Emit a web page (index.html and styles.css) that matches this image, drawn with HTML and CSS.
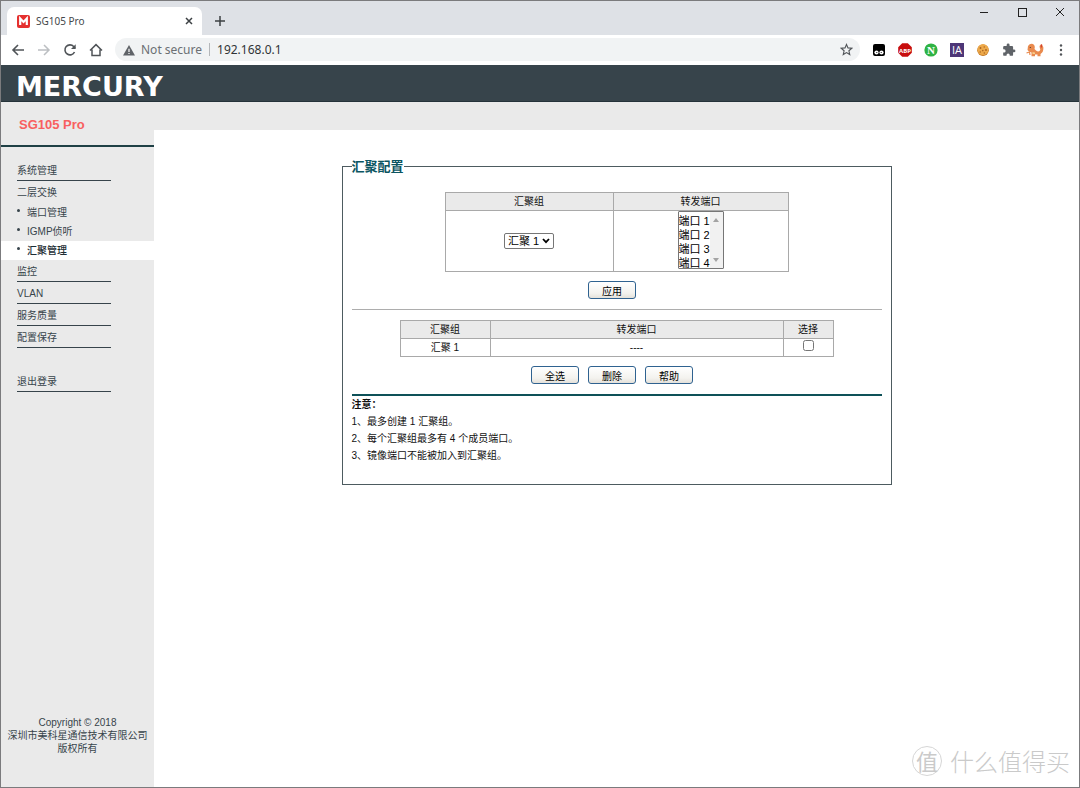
FILE: index.html
```html
<!DOCTYPE html>
<html lang="zh-CN">
<head>
<meta charset="utf-8">
<title>SG105 Pro</title>
<link rel="stylesheet" href="styles.css">
</head>
<body>
<div class="window">
  <div class="tabstrip">
    <div class="tab">
      <svg class="favicon" viewBox="0 0 13 13" width="13" height="13"><rect width="13" height="13" rx="2" fill="#e5302f"/><path d="M3.200 10V3.500L6.500 7L9.800 3.500V10" fill="none" stroke="#fff" stroke-width="2.200"/></svg>
      <span class="tab-title">SG105 Pro</span>
      <button class="icon-btn" aria-label="Close tab"><svg viewBox="0 0 10 10" width="10" height="10"><path d="M2 2L8 8M8 2L2 8" stroke="#3c4043" stroke-width="1.5"/></svg></button>
    </div>
    <button class="icon-btn new-tab" aria-label="New tab"><svg viewBox="0 0 12 12" width="12" height="12"><path d="M6 1V11M1 6H11" stroke="#3c4043" stroke-width="1.5"/></svg></button>
    <div class="window-controls">
      <button class="icon-btn" aria-label="Minimize"><svg viewBox="0 0 10 10" width="10" height="10"><path d="M1 5.5H9" stroke="#222"/></svg></button>
      <button class="icon-btn" aria-label="Maximize"><svg viewBox="0 0 10 10" width="10" height="10"><rect x="1.500" y="1.500" width="8" height="8" fill="none" stroke="#222"/></svg></button>
      <button class="icon-btn" aria-label="Close"><svg viewBox="0 0 10 10" width="10" height="10"><path d="M1 1L9 9M9 1L1 9" stroke="#222"/></svg></button>
    </div>
  </div>

  <div class="toolbar">
    <div class="nav-buttons">
      <button class="icon-btn" aria-label="Back"><svg viewBox="0 0 14 14" width="14" height="14"><path d="M13 7H2M7 2L2 7L7 12" fill="none" stroke="#505458" stroke-width="1.6"/></svg></button>
      <button class="icon-btn" aria-label="Forward"><svg viewBox="0 0 14 14" width="14" height="14"><path d="M1 7H12M7 2L12 7L7 12" fill="none" stroke="#bcbfc2" stroke-width="1.5"/></svg></button>
      <button class="icon-btn" aria-label="Reload"><svg viewBox="0 0 14 14" width="14" height="14"><path d="M11.5 9A5 5 0 1 1 10.7 3.5L12 5" fill="none" stroke="#505458" stroke-width="1.6"/><path d="M12.7 1.3V6H8Z" fill="#505458"/></svg></button>
      <button class="icon-btn" aria-label="Home"><svg viewBox="0 0 14 14" width="14" height="14"><path d="M1 7.5L7 1.6L13 7.5M3 6.5V12.5H11V6.5" fill="none" stroke="#505458" stroke-width="1.5"/></svg></button>
    </div>
    <div class="address">
      <svg viewBox="0 0 12 12" width="12" height="12"><path d="M6 1L12 11.5H0Z" fill="#5f6368"/><path d="M6 4.8V8M6 8.9V10.1" stroke="#fff" stroke-width="1.2"/></svg>
      <label class="secure" for="url">Not secure</label>
      <input id="url" class="url" type="text" value="192.168.0.1">
      <button class="icon-btn" aria-label="Bookmark"><svg viewBox="0 0 14 14" width="13" height="13"><path d="M7 1.6L8.6 5.3L12.7 5.7L9.6 8.4L10.5 12.4L7 10.3L3.5 12.4L4.4 8.4L1.3 5.7L5.4 5.3Z" fill="none" stroke="#505458" stroke-width="1.2"/></svg></button>
    </div>
    <div class="extensions">
      <svg viewBox="0 0 14 14" width="14" height="14"><path d="M3 1H11Q13 1 13 3V11Q13 13 11 13H3Q1 13 1 11V3Q1 1 3 1Z" fill="#000"/><circle cx="4.500" cy="9.500" r="2.100" fill="#fff"/><circle cx="9.500" cy="9.500" r="2.100" fill="#fff"/><circle cx="4.800" cy="9.500" r=".6"/><circle cx="9.200" cy="9.500" r=".6"/></svg>
      <svg viewBox="0 0 14 14" width="14" height="14"><path d="M4.2 .2H9.8L13.8 4.2V9.8L9.8 13.8H4.2L.2 9.8V4.2Z" fill="#c70d0d"/><text x="7" y="9.5" class="badge-abp">ABP</text></svg>
      <svg viewBox="0 0 14 14" width="14" height="14"><circle cx="7" cy="7" r="6.6" fill="#2fb344"/><text x="7" y="10.5" class="badge-n">N</text></svg>
      <svg viewBox="0 0 14 14" width="14" height="14"><rect width="14" height="14" fill="#4d3677"/><text x="7" y="11" class="badge-ia">IA</text></svg>
      <svg viewBox="0 0 14 14" width="14" height="14"><circle cx="7" cy="7.2" r="5.8" fill="#c27722"/><circle cx="7" cy="6.6" r="5.5" fill="#eda94a"/><g fill="#a8611f"><circle cx="4.5" cy="5" r=".9"/><circle cx="8.2" cy="4" r=".7"/><circle cx="10" cy="7" r=".9"/><circle cx="6.8" cy="7.6" r=".8"/><circle cx="4.2" cy="9" r=".7"/><circle cx="8.3" cy="10" r=".7"/></g></svg>
      <svg viewBox="0 0 24 24" width="14" height="14"><path fill="#5f6368" d="M20.500 11H19V7a2 2 0 0 0-2-2h-4V3.500a2.500 2.500 0 0 0-5 0V5H4a2 2 0 0 0-2 2v3.800h1.500a2.700 2.700 0 0 1 0 5.400H2V20a2 2 0 0 0 2 2h3.800v-1.500a2.700 2.700 0 0 1 5.400 0V22H17a2 2 0 0 0 2-2v-4h1.500a2.500 2.500 0 0 0 0-5z"/></svg>
      <svg class="avatar" viewBox="0 0 18 14" width="18" height="14"><path d="M1.500 7L2 3Q4 0 7 1Q9.500 2.500 8.500 6L10 7.500Q12 9 13.500 8Q15 7 13.800 5L13.500 3L15.500 1L17.300 4Q18 9 14.500 11V13.300H11.500V11.500H9V13.300H5.500V9.500L3 8.500Z" fill="#e98a4e"/><path d="M.5 10L3.500 9L4 12" fill="none" stroke="#e98a4e" stroke-width="1.200"/><path d="M15.500 1.500L15.300 4.500" stroke="#d5432f" stroke-width="1.400"/><circle cx="4.300" cy="4.500" r=".6" fill="#333"/><path d="M6.500 9L9 9.500V11H6.500Z" fill="#f6d08c"/></svg>
      <button class="icon-btn" aria-label="Menu"><svg viewBox="0 0 14 14" width="14" height="14"><g fill="#505458"><circle cx="7" cy="2.500" r="1.200"/><circle cx="7" cy="7" r="1.200"/><circle cx="7" cy="11.500" r="1.200"/></g></svg></button>
    </div>
  </div>

  <header class="brand"><span class="logo">MERCURY</span></header>

  <div class="page">
    <aside class="sidebar">
      <h1 class="model">SG105 Pro</h1>
      <nav class="menu">
        <a class="item lined" href="#">系统管理</a>
        <a class="item" href="#">二层交换</a>
        <a class="sub" href="#">端口管理</a>
        <a class="sub" href="#">IGMP侦听</a>
        <a class="sub active" href="#">汇聚管理</a>
        <a class="item lined" href="#">监控</a>
        <a class="item lined" href="#">VLAN</a>
        <a class="item lined" href="#">服务质量</a>
        <a class="item lined" href="#">配置保存</a>
        <a class="item lined logout" href="#">退出登录</a>
      </nav>
      <footer class="copyright">Copyright © 2018<br>深圳市美科星通信技术有限公司<br>版权所有</footer>
    </aside>

    <main class="content">
      <form class="panel" aria-labelledby="panel-title">
        <h2 class="legend" id="panel-title">汇聚配置</h2>
        <table class="grid config">
          <thead><tr><th class="col-group">汇聚组</th><th>转发端口</th></tr></thead>
          <tbody><tr>
            <td>
              <div class="dropdown">
                <select class="group-select" aria-label="汇聚组"><option>汇聚 1</option></select>
                <svg class="chevron" viewBox="0 0 8 6" width="8" height="6"><path d="M1 1L4 4.200L7 1" fill="none" stroke="#000" stroke-width="1.800"/></svg>
              </div>
            </td>
            <td class="ports-cell">
              <div class="listbox">
                <select class="ports" multiple size="4" aria-label="转发端口"><option>端口 1</option><option>端口 2</option><option>端口 3</option><option>端口 4</option></select>
                <span class="gutter"><svg viewBox="0 0 6 4" width="6" height="4"><path d="M0 4L3 0L6 4Z" fill="#a3a3a3"/></svg><svg viewBox="0 0 6 4" width="6" height="4"><path d="M0 0L3 4L6 0Z" fill="#a3a3a3"/></svg></span>
              </div>
            </td>
          </tr></tbody>
        </table>
        <div class="actions"><button class="btn" type="button">应用</button></div>
        <hr class="rule">
        <table class="grid list">
          <thead><tr><th class="col-name">汇聚组</th><th>转发端口</th><th class="col-pick">选择</th></tr></thead>
          <tbody><tr><td>汇聚 1</td><td>----</td><td><input class="check" type="checkbox" aria-label="选择 汇聚 1"></td></tr></tbody>
        </table>
        <div class="actions">
          <button class="btn" type="button">全选</button>
          <button class="btn" type="button">删除</button>
          <button class="btn" type="button">帮助</button>
        </div>
        <hr class="rule strong">
        <div class="notes">
          <strong>注意：</strong>
          <p>1、最多创建 1 汇聚组。</p>
          <p>2、每个汇聚组最多有 4 个成员端口。</p>
          <p>3、镜像端口不能被加入到汇聚组。</p>
        </div>
      </form>
    </main>
  </div>
  <div class="watermark"><span class="seal">值</span><span>什么值得买</span></div>
</div>
</body>
</html>
```
FILE: styles.css
```css
* { box-sizing: border-box; }

body {
  margin: 0;
  font: 10px/14px "Liberation Sans", "Noto Sans CJK SC", sans-serif;
  color: #111;
  background: #fff;
}

.window {
  position: relative;
  display: flex;
  flex-direction: column;
  min-height: 100vh;
  border: 1px solid #7b7b7d;
}

.icon-btn {
  display: flex;
  padding: 0;
  border: 0;
  background: none;
}

/* Browser chrome */
.tabstrip {
  display: flex;
  height: 34px;
  padding: 6px 0 0 6px;
  background: #dee1e6;
}

.tab {
  display: flex;
  align-items: center;
  gap: 6px;
  width: 195px;
  padding: 0 8px 0 10px;
  border-radius: 7px 7px 0 0;
  background: #fff;
}

.tab-title {
  flex: 1;
  font-family: "Noto Sans", sans-serif;
  color: #45484b;
}

.new-tab { margin-left: 12px; align-items: center; }

.window-controls {
  display: flex;
  gap: 28px;
  margin: 0 14px 0 auto;
  align-items: flex-start;
}

.toolbar {
  display: flex;
  align-items: center;
  height: 30px;
  padding: 0 11px 1px 10px;
  background: #fff;
}

.nav-buttons { display: flex; gap: 12px; }

.address {
  display: flex;
  flex: 1;
  align-items: center;
  height: 23px;
  margin: 0 12px;
  padding: 0 7px 0 8px;
  border-radius: 12px;
  background: #f1f3f4;
  font: 12px/16px "Noto Sans", sans-serif;
}

.secure {
  margin: 0 7px 0 6px;
  padding-right: 7px;
  border-right: 1px solid #b4b7ba;
  line-height: 13px;
  color: #6b6f73;
}

.url {
  flex: 1;
  min-width: 0;
  padding: 0;
  border: 0;
  background: none;
  font: inherit;
  color: #303336;
}

.extensions { display: flex; align-items: center; gap: 12px; }
.avatar { margin: 0 -2px; }

.badge-abp, .badge-n, .badge-ia { fill: #fff; text-anchor: middle; }
.badge-abp { font: bold 6px "Open Sans", sans-serif; }
.badge-n { font: bold 11px "Liberation Serif", serif; }
.badge-ia { font: 11px "Open Sans", sans-serif; }

/* Router page */
.brand {
  display: flex;
  align-items: center;
  height: 37px;
  padding: 8px 0 0 15px;
  border-bottom: 1px solid #25333a;
  background: #37444b;
}

.logo {
  font: bold 27px/28px "DejaVu Sans", sans-serif;
  color: #fff;
}

.page {
  display: flex;
  flex: 1;
  background: #eaeaea;
}

.sidebar {
  display: flex;
  flex-direction: column;
  width: 153px;
  color: #37444b;
}

.model {
  margin: 0;
  padding: 14px 0 11px 18px;
  border-bottom: 2px solid #1f4045;
  font-size: 13px;
  line-height: 18px;
  color: #f8605f;
}

.menu {
  display: flex;
  flex-direction: column;
  padding-top: 12px;
}

.item {
  width: 94px;
  height: 22px;
  margin-left: 16px;
  line-height: 24px;
  color: inherit;
  text-decoration: none;
}

.lined { border-bottom: 1px solid #37444b; }
.logout { margin-top: 22px; }

.sub {
  height: 19px;
  padding-left: 16px;
  line-height: 19px;
  color: inherit;
  text-decoration: none;
}

.sub::before {
  content: "";
  display: inline-block;
  width: 3px;
  height: 3px;
  margin-right: 7px;
  border-radius: 50%;
  background: #37444b;
  vertical-align: 4px;
}

.active { background: #fff; color: #1d2d34; font-weight: 500; }

.copyright {
  margin-top: auto;
  padding-bottom: 32px;
  line-height: 13px;
  text-align: center;
}

.content {
  flex: 1;
  margin-top: 28px;
  padding: 36px 16px;
  background: #fff;
}

.panel {
  max-width: 550px;
  min-height: 319px;
  margin: 0 auto;
  padding: 0 9px;
  border: 1px solid #4d5b60;
}

.legend {
  width: fit-content;
  margin: -9px 0 0;
  background: #fff;
  font-size: 13px;
  line-height: 18px;
  color: #0b5561;
}

.grid {
  margin: 16px auto 0;
  border-collapse: collapse;
  table-layout: fixed;
  text-align: center;
}

.grid th, .grid td {
  height: 18px;
  padding: 0;
  border: 1px solid #a9a9a9;
  font-weight: normal;
  line-height: 16px;
}

.grid th { background: #eaeaea; }

.config { width: 344px; }
.col-group { width: 168px; }
.config td { height: 61px; }
.config .ports-cell { vertical-align: top; }

.dropdown {
  position: relative;
  width: 50px;
  height: 16px;
  margin: 0 auto;
}

.group-select {
  display: block;
  width: 100%;
  height: 16px;
  padding: 0 0 0 3px;
  appearance: none;
  border: 1px solid #767676;
  border-radius: 2px;
  background: #fff;
  font: 11px/14px "Liberation Sans", "Noto Sans CJK SC", sans-serif;
  color: #000;
}

.chevron {
  position: absolute;
  top: 5px;
  right: 4px;
  pointer-events: none;
}

.listbox {
  display: flex;
  width: 46px;
  height: 58px;
  margin: 0 auto;
  border: 1px solid #767676;
  border-radius: 1px;
}

.ports {
  flex: 1;
  min-width: 0;
  padding: 0;
  border: 0;
  overflow: hidden;
  font: 11px/14px "Liberation Sans", "Noto Sans CJK SC", sans-serif;
  color: #000;
}

.ports option {
  height: 14px;
  min-height: 14px;
  padding: 0;
  line-height: 12px;
}

.gutter {
  display: flex;
  flex-direction: column;
  align-items: center;
  justify-content: space-between;
  width: 13px;
  padding: 6px 0;
  background: #f1f1f1;
}

.actions {
  display: flex;
  justify-content: center;
  gap: 9px;
  margin: 9px 9px 0 0;
}

.btn {
  width: 48px;
  height: 18px;
  padding: 3px 0 0;
  border: 1px solid #2f6290;
  border-radius: 3px;
  background: linear-gradient(#fff, #f3f2ee 70%, #e4e1da);
  font: inherit;
  line-height: 13px;
  color: #000;
}

.rule {
  margin: 10px 0 0;
  border: 0;
  border-top: 1px solid #adadad;
}

.strong { border-top: 2px solid #0e5158; }

.list { width: 434px; margin-top: 10px; }
.col-name { width: 90px; }
.col-pick { width: 50px; }

.check {
  display: block;
  width: 11px;
  height: 11px;
  margin: 0 auto 4px;
}

.notes { line-height: 17px; }
.notes p { margin: 0; }

.watermark {
  position: absolute;
  right: 9px;
  bottom: 11px;
  display: flex;
  align-items: center;
  gap: 8px;
  font: 300 24px/30px "Noto Sans CJK SC", sans-serif;
  color: #cacaca;
}

.seal {
  width: 30px;
  height: 30px;
  border: 1px solid #d6d6d6;
  border-radius: 50%;
  font-size: 22px;
  font-weight: 400;
  line-height: 26px;
  text-align: center;
}
```
